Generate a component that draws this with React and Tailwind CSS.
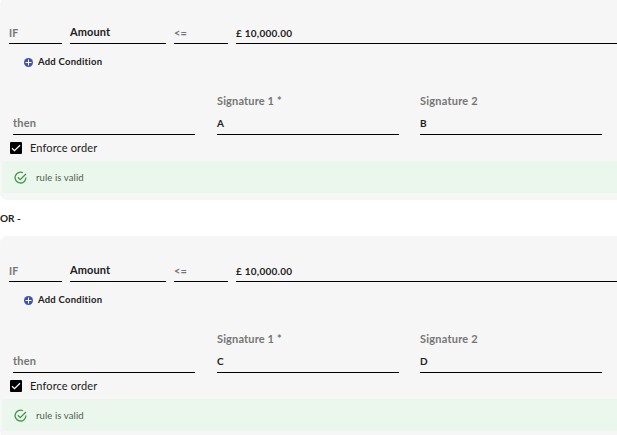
import React from "react";

function Field({ className, children }) {
  return (
    <div className={`flex flex-col justify-end border-b border-black leading-3 font-bold ${className}`}>
      {children}
    </div>
  );
}

function RuleCard({ first, second }) {
  return (
    <section className="h-[202px] w-[640px] shrink-0 rounded-[7px] bg-[#f6f6f6]">
      <div className="flex h-[46px] gap-2 pl-[9px]">
        <Field className="w-[53px] pb-1 text-[10.5px] tracking-[0.2px] text-[#757575]">IF</Field>
        <Field className="w-24 pb-[5px] text-[11px] tracking-[0.1px]">Amount</Field>
        <Field className="w-[54px] pb-1 text-[11px] text-[#757575]">&lt;=</Field>
        <Field className="flex-1 pb-1 text-[10px] tracking-[0.25px]">£ 10,000.00</Field>
      </div>
      <div className="flex h-9 items-center gap-[5px] pl-6 text-[9.5px] font-bold leading-3 tracking-[0.24px]">
        <svg className="size-[9px]" viewBox="0 0 9 9" fill="none">
          <circle cx="4.5" cy="4.5" r="4.5" fill="#3f51b5" />
          <path d="M4.5 1.5v6M1.5 4.5h6" stroke="white" />
        </svg>
        <span>Add Condition</span>
      </div>
      <div className="flex h-[55px] pl-[13px]">
        <Field className="w-[182px] pb-[5px] text-[11px] tracking-[0.2px] text-[#757575]">then</Field>
        <Field className="ml-[22px] w-[182px] pb-[5px] text-[10px]">
          <span className="mb-[10px] text-[11px] tracking-[0.15px] text-[#757575]">Signature 1 *</span>
          <span>{first}</span>
        </Field>
        <Field className="ml-[21px] w-[182px] pb-[5px] text-[10px]">
          <span className="mb-[10px] text-[11px] tracking-[0.22px] text-[#757575]">Signature 2</span>
          <span>{second}</span>
        </Field>
      </div>
      <div className="flex h-[26px] items-center gap-2 pl-[10px] text-[11px] leading-3 tracking-[0.12px]">
        <svg className="size-3" viewBox="0 0 12 12" fill="none">
          <rect width="12" height="12" rx="1" fill="black" />
          <path d="M2 6.2 4.5 8.6 10 3.2" stroke="white" strokeWidth="1.2" />
        </svg>
        <span>Enforce order</span>
      </div>
      <div className="ml-[2px] flex h-8 items-center gap-[9px] rounded-[3px] bg-[#ebf6ed] pl-3 text-[9.5px] leading-3 tracking-[0.1px] text-[#4c5f4e]">
        <svg className="size-[13px]" viewBox="0 0 24 24" fill="none" stroke="#43964a" strokeWidth="2.4">
          <path d="M16.5 3.2A10 10 0 1 0 22 12M7 11.5l4.5 4.5L22 5.5" />
        </svg>
        <span className="pt-[2px]">rule is valid</span>
      </div>
    </section>
  );
}

export default function App() {
  return (
    <main className="h-[435px] w-[617px] overflow-hidden bg-white font-['Lato',sans-serif] text-[#212121]">
      <div className="-mt-[2px] flex flex-col">
        <RuleCard first="A" second="B" />
        <div className="flex h-9 shrink-0 items-center text-[10px] font-bold leading-3">OR -</div>
        <RuleCard first="C" second="D" />
      </div>
    </main>
  );
}
